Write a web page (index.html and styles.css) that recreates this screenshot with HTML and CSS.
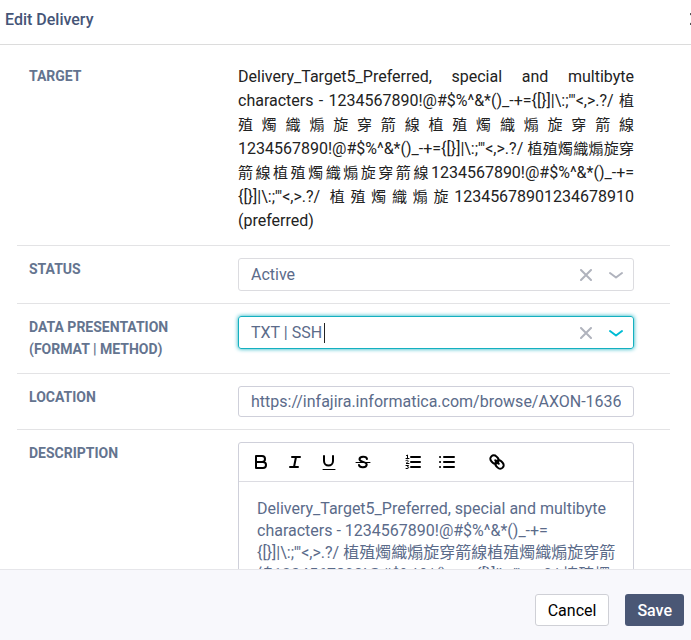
FILE: index.html
```html
<!DOCTYPE html>
<html lang="en">

<head>
  <meta charset="UTF-8">
  <meta name="viewport" content="width=device-width, initial-scale=1.0">
  <title>Edit Delivery</title>
  <link rel="stylesheet" href="styles.css">
</head>

<body>

  <!-- Header -->
  <header class="modal-header">
    <h2>Edit Delivery</h2>
    <button class="close-btn" type="button" aria-label="Close">
      <svg width="12" height="12" viewBox="0 0 12 12"><path d="M1 1l10 10M11 1L1 11" /></svg>
    </button>
  </header>

  <!-- Form -->
  <form class="modal-body" id="deliveryForm">
    <div class="form-row">
      <span class="label">TARGET</span>
      <p class="target-text">Delivery_Target5_Preferred, special and multibyte characters - <span class="run">1234567890!@#$%^&amp;*()_-+=</span><wbr><span class="run">{[}]|\:;'"&lt;,&gt;.?/</span> <span class="cjk">植殖燭織煽旋穿箭線植殖燭織煽旋穿箭線</span><wbr><span class="run">1234567890!@#$%^&amp;*()_-+=</span><wbr><span class="run">{[}]|\:;'"&lt;,&gt;.?/</span> <span class="cjk">植殖燭織煽旋穿箭線植殖燭織煽旋穿箭線</span><wbr><span class="run">1234567890!@#$%^&amp;*()_-+=</span><wbr><span class="run">{[}]|\:;'"&lt;,&gt;.?/</span> <span class="cjk">植殖燭織煽旋</span>12345678901234678910 (preferred)</p>
    </div>

    <div class="form-row">
      <label class="label" for="status">STATUS</label>
      <div class="select-box">
        <select id="status">
          <option>Active</option>
        </select>
        <button class="clear-btn" type="button" aria-label="Clear status">
          <svg width="12" height="12" viewBox="0 0 12 12"><path d="M1 1l10 10M11 1L1 11" /></svg>
        </button>
        <svg class="chevron" width="16" height="10" viewBox="0 0 16 10"><path d="M2 3l6 4.500 6-4.500" /></svg>
      </div>
    </div>

    <div class="form-row">
      <label class="label label-tall" for="presentation">DATA PRESENTATION (FORMAT | METHOD)</label>
      <div class="select-box focused">
        <select id="presentation">
          <option>TXT | SSH</option>
        </select>
        <span class="caret"></span>
        <button class="clear-btn" type="button" aria-label="Clear data presentation">
          <svg width="12" height="12" viewBox="0 0 12 12"><path d="M1 1l10 10M11 1L1 11" /></svg>
        </button>
        <svg class="chevron" width="16" height="10" viewBox="0 0 16 10"><path d="M2 3l6 4.500 6-4.500" /></svg>
      </div>
    </div>

    <div class="form-row">
      <label class="label" for="location">LOCATION</label>
      <input class="text-input" id="location" type="text" value="https://infajira.informatica.com/browse/AXON-16365">
    </div>

    <div class="form-row">
      <span class="label" id="descriptionLabel">DESCRIPTION</span>
      <div class="editor">
        <div class="toolbar">
          <button type="button" aria-label="Bold">
            <svg viewBox="0 0 18 18"><path d="M4 3h6a3 3 0 0 1 0 6H4zM4 9h7a3 3 0 0 1 0 6H4z" /></svg>
          </button>
          <button type="button" aria-label="Italic">
            <svg viewBox="0 0 18 18"><path d="M6 4h8M4 14h8M10 4L8 14" /></svg>
          </button>
          <button type="button" aria-label="Underline">
            <svg viewBox="0 0 18 18"><path d="M4 3v5a4.500 4.500 0 0 0 9 0V3" /><path class="thin" d="M3 16.500h12" /></svg>
          </button>
          <button type="button" aria-label="Strike">
            <svg viewBox="0 0 18 18"><path d="M13 6C12.500 3 5.500 3 5.500 6.300 5.500 9.500 12.700 8.300 12.700 11.500 12.700 15 5.500 15 5 12" /><path class="thin" d="M2 9.500h14" /></svg>
          </button>
          <span class="toolbar-gap"></span>
          <button type="button" aria-label="Ordered list">
            <svg viewBox="0 0 18 18"><path d="M7 4h9M7 9h9M7 14h9" /><path class="thin" d="M2.500 2.500l1-.5v3.500M2 5.500h3M2 7.500c3-1 3 1 0 3h3M2 12.500h2.500l-1 1.500c2 0 1.500 2-1.500 1.500" /></svg>
          </button>
          <button type="button" aria-label="Bullet list">
            <svg viewBox="0 0 18 18"><path d="M6 4h10M6 9h10M6 14h10M2 4h.1M2 9h.1M2 14h.1" /></svg>
          </button>
          <span class="toolbar-gap"></span>
          <button type="button" aria-label="Link">
            <svg viewBox="0 0 18 18"><g transform="rotate(45 9 9)"><rect x="1" y="5.500" width="9" height="7" rx="3.500" /><rect x="8" y="5.500" width="9" height="7" rx="3.500" /><path d="M6.500 9h5" /></g></svg>
          </button>
        </div>
        <div class="editor-text" contenteditable="true" role="textbox" aria-multiline="true" aria-labelledby="descriptionLabel" spellcheck="false">Delivery_Target5_Preferred, special and multibyte characters - <span class="run">1234567890!@#$%^&amp;*()_-+=</span><wbr><span class="run">{[}]|\:;'"&lt;,&gt;.?/</span> 植殖燭織煽旋穿箭線植殖燭織煽旋穿箭線<wbr><span class="run">1234567890!@#$%^&amp;*()_-+=</span><wbr><span class="run">{[}]|\:;'"&lt;,&gt;.?/</span> 植殖燭</div>
      </div>
    </div>
  </form>

  <!-- Footer -->
  <footer class="modal-footer">
    <button class="cancel-btn" type="button">Cancel</button>
    <button class="save-btn" type="submit" form="deliveryForm">Save</button>
  </footer>

</body>

</html>
```
FILE: styles.css
```css
* {
  margin: 0;
  padding: 0;
  box-sizing: border-box;
}

body {
  display: flex;
  flex-direction: column;
  height: 100vh;
  overflow: hidden;
  background-color: #fff;
  color: #5b6b8a;
  font-family: Roboto, "Noto Sans CJK TC", sans-serif;
  font-size: 16px;
}

button,
input,
select {
  font: inherit;
  color: inherit;
  border: none;
  background: none;
}

button {
  cursor: pointer;
}

svg {
  display: block;
  fill: none;
  stroke: currentColor;
  stroke-width: 2;
  stroke-linecap: round;
  stroke-linejoin: round;
}

/* Header */
.modal-header {
  display: flex;
  flex-shrink: 0;
  align-items: center;
  justify-content: space-between;
  height: 45px;
  padding: 0 0 6px 5px;
  border-bottom: 1px solid #dcdcdc;
}

.modal-header h2 {
  font-size: 16px;
  font-weight: 500;
  color: #455577;
}

.close-btn {
  margin-right: -11px;
  color: #333;
}

/* Form */
.modal-body {
  flex: 1;
  min-height: 0;
  overflow: hidden;
  padding: 8px 21px 0 17px;
}

.form-row {
  display: grid;
  grid-template-columns: 209px minmax(0, 1fr);
  align-items: start;
  padding: 12px 36px 12px 12px;
  border-bottom: 1px solid #e3e3e5;
}

.label {
  padding-right: 40px;
  font-size: 14px;
  font-weight: 700;
  line-height: 22px;
  color: #64748f;
}

.label-tall {
  padding-bottom: 1px;
}

.target-text {
  line-height: 24px;
  text-align: justify;
  color: #222;
}

/* symbol strings only break between each other */
.run {
  white-space: nowrap;
}

.cjk {
  font-size: 15px;
}

.select-box {
  display: flex;
  align-items: center;
  height: 33px;
  padding: 0 9px 0 12px;
  border: 1px solid #dcdce0;
  border-radius: 3px;
}

.select-box select {
  appearance: none;
  outline: none;
}

.select-box.focused {
  border-color: #14b0c0;
  box-shadow: 0 0 4px #14b0c0;
}

.caret {
  width: 1px;
  height: 20px;
  margin-left: 1px;
  background-color: #222;
}

.clear-btn {
  margin-left: auto;
  margin-right: 16px;
  color: #b0b3bd;
}

.chevron {
  color: #b0b3bd;
}

.focused .chevron {
  color: #00bcd4;
}

.text-input {
  width: 100%;
  height: 31px;
  padding: 0 12px;
  border: 1px solid #cfd0da;
  border-radius: 3px;
}

/* Description editor */
.editor {
  border: 1px solid #cfd0da;
  border-radius: 3px;
}

.toolbar {
  display: flex;
  align-items: center;
  height: 39px;
  padding: 0 13px;
  gap: 16px;
  border-bottom: 1px solid #dcdce2;
  color: #000;
}

.toolbar svg {
  width: 18px;
  height: 18px;
}

.toolbar .thin {
  stroke-width: 1;
}

.toolbar-gap {
  width: 0;
}

.editor-text {
  padding: 16px 16px 16px 18px;
  line-height: 22px;
  outline: none;
}

/* Footer */
.modal-footer {
  display: flex;
  flex-shrink: 0;
  align-items: center;
  justify-content: flex-end;
  gap: 16px;
  height: 71px;
  padding: 10px 7px 0 0;
  border-top: 1px solid #e6e6ea;
  background-color: #f8f8fc;
}

.modal-footer button {
  height: 32px;
  border-radius: 3px;
}

.cancel-btn {
  padding: 0 12px;
  border: 1px solid #cfd0d6;
  background-color: #fff;
  color: #000;
}

.save-btn {
  padding: 0 12px;
  background-color: #4a5775;
  color: #fff;
  font-weight: 500;
}
```
